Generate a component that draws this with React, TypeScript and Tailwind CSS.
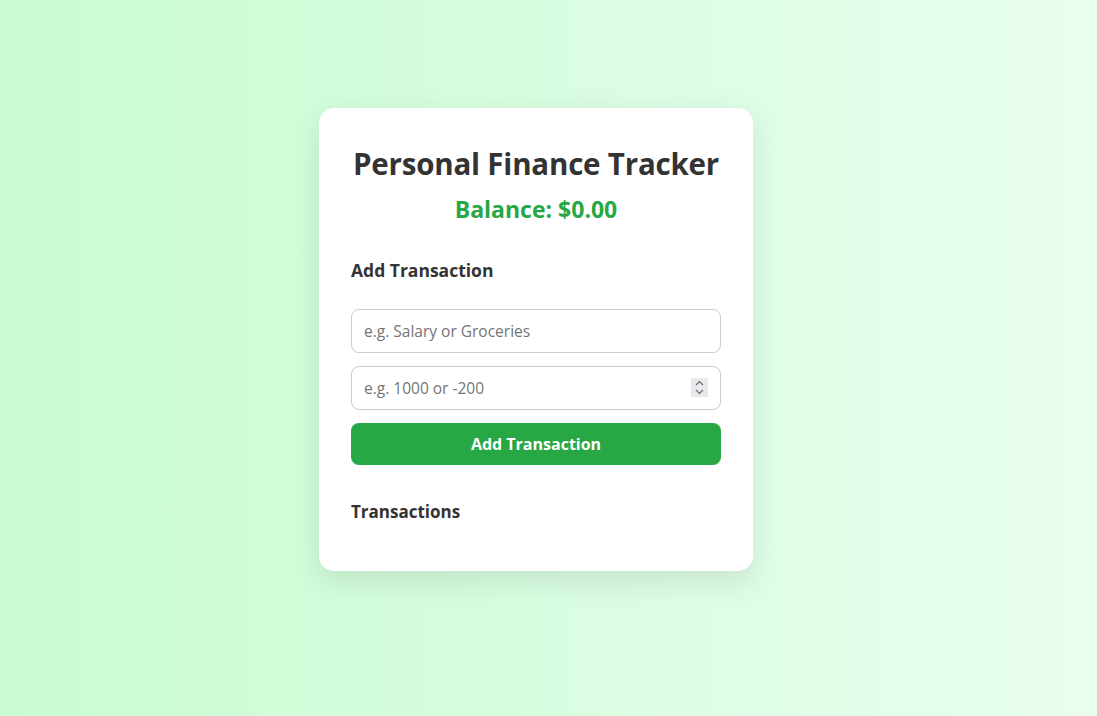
import React, { useState } from 'react';

type Tx = { id: number; text: string; amount: number };

export default function App() {
  const [text, setText] = useState('');
  const [amount, setAmount] = useState('');
  const [list, setList] = useState<Tx[]>([]);

  const balance = list.reduce((sum, t) => sum + t.amount, 0);

  const handleAdd = () => {
    const n = parseFloat(amount);
    if (!text.trim() || isNaN(n)) return;
    setList([...list, { id: Date.now(), text: text.trim(), amount: n }]);
    setText('');
    setAmount('');
  };

  const step = (d: number) => {
    const n = parseFloat(amount) || 0;
    setAmount(String(n + d));
  };

  return (
    <div
      className="min-h-screen w-full flex items-center justify-center pb-[37px] pr-[25px] bg-gradient-to-r from-[#c8fcd0] to-[#e9fef0] text-[#333]"
      style={{ fontFamily: '"Open Sans", "Noto Sans", sans-serif' }}
    >
      <div className="w-[434px] bg-white rounded-[15px] px-8 pt-[36px] pb-[47px] shadow-[0_10px_30px_rgba(0,0,0,0.1)]">
        <h1 className="text-center text-[29.5px] leading-[40px] font-bold tracking-[-0.2px] whitespace-nowrap">
          Personal Finance Tracker
        </h1>
        <h2 className="text-center text-[23px] leading-[28px] font-bold text-[#28a745] mt-[11px]">
          Balance: ${balance.toFixed(2)}
        </h2>

        <h3 className="text-[17.5px] leading-[24px] font-bold mt-[35px]">Add Transaction</h3>

        <div className="flex flex-col gap-[13px] mt-[27px]">
          <input
            type="text"
            value={text}
            onChange={e => setText(e.target.value)}
            placeholder="e.g. Salary or Groceries"
            className="h-[44px] w-full rounded-lg border border-[#ccc] px-3 text-[15.5px] placeholder:text-[#757575] focus:outline-none"
          />
          <div className="relative">
            <input
              type="number"
              value={amount}
              onChange={e => setAmount(e.target.value)}
              placeholder="e.g. 1000 or -200"
              className="h-[44px] w-full rounded-lg border border-[#ccc] pl-3 pr-9 text-[15.5px] placeholder:text-[#757575] focus:outline-none [appearance:textfield] [&::-webkit-inner-spin-button]:appearance-none [&::-webkit-outer-spin-button]:appearance-none"
            />
            <div className="absolute right-[13px] top-[12px] w-[17px] h-[19px] bg-[#e9e9ed] flex flex-col items-center justify-center">
              <button onClick={() => step(1)} className="h-[9px] w-full flex items-center justify-center cursor-default">
                <svg width="9" height="6" viewBox="0 0 9 6" fill="none" stroke="#6b6b6b" strokeWidth="1.2">
                  <path d="M1 5 L4.5 1.5 L8 5" />
                </svg>
              </button>
              <button onClick={() => step(-1)} className="h-[9px] w-full flex items-center justify-center cursor-default">
                <svg width="9" height="6" viewBox="0 0 9 6" fill="none" stroke="#6b6b6b" strokeWidth="1.2">
                  <path d="M1 1 L4.5 4.5 L8 1" />
                </svg>
              </button>
            </div>
          </div>
          <button
            onClick={handleAdd}
            className="h-[42px] w-full rounded-lg bg-[#28a745] text-white text-[16px] font-bold cursor-pointer"
          >
            Add Transaction
          </button>
        </div>

        <h3 className="text-[17px] leading-[24px] font-bold mt-[35px]">Transactions</h3>
        <ul>
          {list.map(t => (
            <li key={t.id} className="flex justify-between py-2 border-b border-[#eee] text-[15px]">
              <span>{t.text}</span>
              <span className={t.amount < 0 ? 'text-[#dc3545]' : 'text-[#28a745]'}>
                {t.amount < 0 ? '-' : '+'}${Math.abs(t.amount).toFixed(2)}
              </span>
            </li>
          ))}
        </ul>
      </div>
    </div>
  );
}
